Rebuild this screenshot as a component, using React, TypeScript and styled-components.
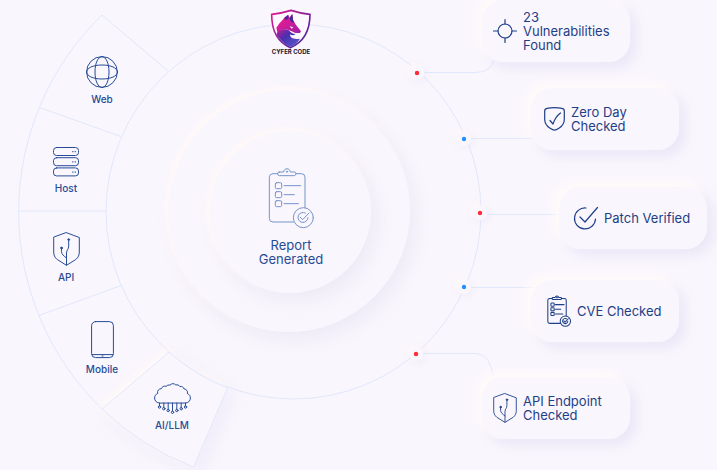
import React from "react";
import styled, { createGlobalStyle, css } from "styled-components";

const W = 717;
const H = 470;
const INK = "#264c96";
const SURFACE = "#faf6fd";
const LINE = "#e1e8fc";

const GlobalStyle = createGlobalStyle`
  *, *::before, *::after { box-sizing: border-box; }
  body {
    margin: 0;
    background: ${SURFACE};
    color: ${INK};
    font-family: Inter, "Liberation Sans", sans-serif;
  }
`;

const Stage = styled.main`
  position: relative;
  width: 100%;
  aspect-ratio: ${W} / ${H};
  overflow: hidden;
`;

const Backdrop = styled.svg`
  position: absolute;
  inset: 0;
  width: 100%;
  height: 100%;
`;

const Wedge = styled.path`
  fill: ${SURFACE};
  stroke: ${LINE};
  filter: drop-shadow(-3px -3px 4px #fffaf8) drop-shadow(6px 6px 8px rgba(190, 192, 232, 0.18));
`;

const Halo = styled.circle`
  fill: ${SURFACE};
  filter: drop-shadow(-2px -2px 3px #fffaf8) drop-shadow(2px 2px 3px rgba(190, 192, 232, 0.18));
`;

const placed = css<{ $x: number; $y: number }>`
  position: absolute;
  left: ${(p) => (p.$x / W) * 100}%;
  top: ${(p) => (p.$y / H) * 100}%;
`;

const Disc = styled.div<{ $x: number; $y: number; $size: number }>`
  ${placed}
  width: ${(p) => p.$size}px;
  height: ${(p) => p.$size}px;
  margin: ${(p) => -p.$size / 2}px 0 0 ${(p) => -p.$size / 2}px;
  border-radius: 50%;
  background: ${SURFACE};
  box-shadow: -3px -3px 5px #fff9f8, 6px 8px 18px rgba(190, 192, 220, 0.2);
`;

const Core = styled(Disc)`
  display: flex;
  flex-direction: column;
  align-items: center;
  justify-content: center;
  gap: 9px;
  padding: 8px 0 0 2px;
`;

const CoreIcon = styled.div`
  color: #7594cb;
`;

const CoreTitle = styled.h1`
  margin: 0;
  width: 90px;
  font-size: 13px;
  font-weight: 400;
  line-height: 14px;
  text-align: center;
`;

const Brand = styled.div`
  ${placed}
  width: 60px;
  margin-left: -30px;
  display: flex;
  flex-direction: column;
  align-items: center;
`;

const BrandName = styled.span`
  font: 700 6px/6px Inter, sans-serif;
  color: #17122b;
  white-space: nowrap;
`;

const List = styled.ul`
  margin: 0;
  padding: 0;
  list-style: none;
`;

const Target = styled.li`
  ${placed}
  width: 60px;
  margin-left: -30px;
  display: flex;
  flex-direction: column;
  align-items: center;
  gap: 4px;
  font-size: 10px;
  font-weight: 500;
  line-height: 14px;
`;

const Card = styled.li<{ $pad: number }>`
  ${placed}
  width: 148px;
  height: 62px;
  padding: 0 12px 0 ${(p) => p.$pad}px;
  display: flex;
  align-items: center;
  gap: 6px;
  border-radius: 21px;
  background: ${SURFACE};
  color: #1d3f86;
  font-size: 13px;
  line-height: 14px;
  box-shadow: -5px -5px 9px #fffbfa, 6px 6px 12px rgba(190, 190, 230, 0.26);

  svg { flex: none; }
`;

const Glyph = styled.svg`
  display: block;
  fill: none;
  stroke: currentColor;
  stroke-width: 1;
  stroke-linecap: round;
  stroke-linejoin: round;
  overflow: visible;
`;

const GlobeIcon = () => (
  <Glyph width="32" height="32" viewBox="0 0 32 32">
    <circle cx="16" cy="16" r="15.4" />
    <path d="M16 .6C12 .6 9 7 9 16s3 15.4 7 15.4S23 25 23 16 20 .6 16 .6Z" />
    <path d="M.6 16c0-4 6.4-7 15.4-7s15.4 3 15.4 7-6.4 7-15.4 7S.6 20 .6 16Z" />
  </Glyph>
);

const ServerIcon = () => (
  <Glyph width="26" height="30" viewBox="0 0 26 30">
    {[0.5, 10.7, 20.9].map((y) => (
      <g key={y}>
        <rect x=".5" y={y} width="25" height="8" rx="3" />
        <path d={`M19.5 ${y + 4.2}h.6M22 ${y + 4.2}h.6`} />
      </g>
    ))}
  </Glyph>
);

const CircuitShieldIcon = ({ w, h }: { w: number; h: number }) => (
  <Glyph width={w} height={h} viewBox="0 0 27 34">
    <path d="M13.5.7 26.3 5.5V20c0 3-1 5.500-3.500 7.500L13.500 33.300 4.200 27.500C1.700 25.500.7 23 .7 20V5.500Z" />
    <path d="M13.500 33V21c0-3 2.200-3.500 2.200-7V8.500M13.500 26c-2.500-2-5-3.500-5-6.500v-3" />
    <circle cx="15.700" cy="7.600" r=".9" fill="currentColor" />
    <circle cx="8.500" cy="16" r=".9" fill="currentColor" />
  </Glyph>
);

const PhoneIcon = () => (
  <Glyph width="23" height="37" viewBox="0 0 23 37">
    <rect x=".6" y=".6" width="21.800" height="36" rx="4" />
    <path d="M1 33.600h21M11 35h1" />
  </Glyph>
);

const CloudIcon = () => (
  <Glyph width="37" height="31" viewBox="0 0 37 31">
    <path d="M5 20C2 19.500.6 17.500.6 15c0-2.300 1.200-3.800 3-4.400C3 7.500 5 5.700 7.300 5.700 8 3.700 10 2.600 12.300 3.300 13.300 2.100 14.700 1.700 16 2.200c1.200-2 4.500-2 5.800-.2 1.600-.5 3.300.1 4 1.500 2.200-.4 4 .8 4.400 2.500 2.400.2 3.800 2.200 3.200 4.600 2 .8 3 2.300 3 4.400 0 2.500-1.600 4.600-4.400 5Z" />
    <path d="M5.500 20v3M9.800 20v4.500M14.200 20v6.500M18.500 20v8M22.800 20v6.500M27.200 20v4.500M31.500 20v3" />
    {[[5.5, 24], [9.8, 25.7], [14.2, 27.5], [18.5, 29.3], [22.8, 27.5], [27.2, 25.7], [31.5, 24]].map(([x, y]) => (
      <circle key={x} cx={x} cy={y} r="1.200" />
    ))}
  </Glyph>
);

const ClipboardIcon = ({ w, h, stroke }: { w: number; h: number; stroke: number }) => (
  <Glyph width={w} height={h} viewBox="54 20 138 186">
    <g strokeWidth={stroke}>
      <path d="M83 40H69Q58 40 58 51V174Q58 185 69 185H131M165 142V51Q165 40 154 40H138" />
      <path d="M88 35H101C102 22 120 22 121 35H133Q138 35 138 40T133 46H88Q83 46 83 40T88 35Z" />
      <circle cx="111" cy="34" r="2" />
      {[[76, 152], [103, 133], [130, 145]].map(([y, end]) => (
        <g key={y}>
          <rect x="76" y={y - 9} width="19" height="18" rx="4" />
          <path d={`M102 ${y}H${end}`} />
        </g>
      ))}
      <circle cx="160" cy="172" r="30" />
      <path d="M166 158A15 15 0 1 0 174 172M151 171 158 178 177 158" />
    </g>
  </Glyph>
);

const TargetIcon = () => (
  <Glyph width="24" height="24" viewBox="0 0 24 24">
    <g strokeWidth="1.200">
      <circle cx="12" cy="12" r="7" />
      <path d="M12 .5V5M12 19v4.500M.5 12H5M19 12h4.500" />
    </g>
  </Glyph>
);

const CheckShieldIcon = () => (
  <Glyph width="21" height="24" viewBox="0 0 21 24">
    <g strokeWidth="1.200">
      <path d="M3 1.400C8 .5 13 .5 18 1.400 19.600 1.700 20.300 2.500 20.300 4v8.500c0 4-2 6.500-5 8.500-2 1.300-3.500 2.200-4.800 2.200S7.700 22.300 5.700 21c-3-2-5-4.500-5-8.500V4C.7 2.500 1.400 1.700 3 1.400Z" />
      <path d="m6 13.500 3 3.500C10.500 12.500 13 8.500 16.500 6" />
    </g>
  </Glyph>
);

const CheckCircleIcon = () => (
  <Glyph width="24" height="24" viewBox="0 0 24 24">
    <path d="M12 2A10.500 10.500 0 1 0 21.500 13M6 11l5 5L23.500 1.500" strokeWidth="1.200" />
  </Glyph>
);

const BrandMark = () => (
  <svg width="42" height="40" viewBox="61 28 126 120" aria-hidden="true">
    <defs>
      <linearGradient id="rim" x1="0" y1="0" x2="1" y2="1">
        <stop offset="0" stopColor="#e5178c" />
        <stop offset=".5" stopColor="#8a2297" />
        <stop offset="1" stopColor="#3b2ca0" />
      </linearGradient>
      <linearGradient id="fur" x1="0" y1="0" x2="1" y2="1">
        <stop offset="0" stopColor="#f9188c" />
        <stop offset="1" stopColor="#a021a6" />
      </linearGradient>
      <linearGradient id="mane" x1="0" y1="0" x2="1" y2="1">
        <stop offset="0" stopColor="#c41b9b" />
        <stop offset=".4" stopColor="#4a2fae" />
        <stop offset="1" stopColor="#5a5fd0" />
      </linearGradient>
    </defs>
    <path d="M66 44Q95 41 124 32Q152 41 181 44C181 92 166 126 122 144C80 126 66 92 66 44Z" fill="#fdf8ff" stroke="url(#rim)" strokeWidth="5" strokeLinejoin="round" />
    <path d="M80 84 90 70 98 62 105 53 116 45 119 54 128 43 130 61 139 76 154 95 151 100 137 100 126 95 110 89 94 91 84 101Z" fill="url(#fur)" />
    <path d="M104 55 115 46 117 56 107 62ZM128 43 130 61 134 69 124 66 120 55Z" fill="#3b2a9c" />
    <path d="M80 103C88 89 106 84 119 93C123 98 129 103 138 103C131 109 125 107 121 104C121 115 132 120 151 117C143 130 133 137 122 142C110 136 96 126 87 114Q82 108 80 103Z" fill="url(#mane)" />
    <path d="M120 80 131 83 126 87Z" fill="#fff" />
  </svg>
);

const targets = [
  { label: "Web", x: 102, y: 56, icon: <GlobeIcon /> },
  { label: "Host", x: 66, y: 147, icon: <ServerIcon /> },
  { label: "API", x: 66, y: 232, icon: <CircuitShieldIcon w={27} h={34} /> },
  { label: "Mobile", x: 102, y: 321, icon: <PhoneIcon /> },
  { label: "AI/LLM", x: 172, y: 383, icon: <CloudIcon /> },
];

const findings = [
  { label: "23 Vulnerabilities Found", x: 482, y: 0, pad: 11, icon: <TargetIcon /> },
  { label: "Zero Day Checked", x: 531, y: 88, pad: 13, icon: <CheckShieldIcon /> },
  { label: "Patch Verified", x: 559, y: 187, pad: 15, icon: <CheckCircleIcon /> },
  { label: "CVE Checked", x: 531, y: 280, pad: 16, icon: <ClipboardIcon w={24} h={32} stroke={6} /> },
  { label: "API Endpoint Checked", x: 482, y: 377, pad: 11, icon: <CircuitShieldIcon w={24} h={30} /> },
];

const pins = [
  { x: 417, y: 73, color: "#ff2b36" },
  { x: 464, y: 139, color: "#2490ff" },
  { x: 480, y: 213, color: "#ff2b36" },
  { x: 464, y: 287, color: "#2490ff" },
  { x: 416, y: 354, color: "#ff2b36" },
];

export default function App() {
  return (
    <>
      <GlobalStyle />
      <Stage>
        <Backdrop viewBox={`0 0 ${W} ${H}`} fill="none" stroke={LINE} aria-hidden="true">
          <path d="M168 71 102 15A274.500 274.500 0 0 0 102 409M39.500 107.500 121 136.500M19 211H106.500M39 315.500 121 285.500" />
          <circle cx="293.500" cy="211.500" r="187.500" />
          <Wedge d="M169 352 102 409A274.500 274.500 0 0 0 193.500 467L227.500 388A187.500 187.500 0 0 1 169 352Z" />
          <path d="M424 72.500H476Q491 72 494 60M471 138.500H540M487 214.500H565M471 287.500H540M423 353.500H477Q491 355 494 380" />
          {pins.map((p) => (
            <g key={p.y} stroke="none">
              <Halo cx={p.x} cy={p.y} r="7" />
              <circle cx={p.x} cy={p.y} r="2.200" fill={p.color} />
            </g>
          ))}
        </Backdrop>

        <Disc $x={289} $y={211} $size={242} />
        <Core $x={290} $y={212} $size={162}>
          <CoreIcon>
            <ClipboardIcon w={46} h={62} stroke={3} />
          </CoreIcon>
          <CoreTitle>Report Generated</CoreTitle>
        </Core>

        <Brand $x={291} $y={9}>
          <BrandMark />
          <BrandName>CYFER CODE</BrandName>
        </Brand>

        <List>
          {targets.map((t) => (
            <Target key={t.label} $x={t.x} $y={t.y}>
              {t.icon}
              {t.label}
            </Target>
          ))}
        </List>

        <List>
          {findings.map((f) => (
            <Card key={f.label} $x={f.x} $y={f.y} $pad={f.pad}>
              {f.icon}
              <span>{f.label}</span>
            </Card>
          ))}
        </List>
      </Stage>
    </>
  );
}
